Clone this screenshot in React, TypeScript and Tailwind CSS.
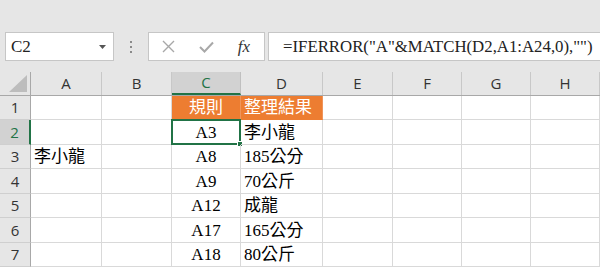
import React from "react";

const cols = [
  { k: "A", w: 71 },
  { k: "B", w: 70 },
  { k: "C", w: 69 },
  { k: "D", w: 82 },
  { k: "E", w: 70 },
  { k: "F", w: 69 },
  { k: "G", w: 69 },
  { k: "H", w: 69 },
];

const rowHeights = [24, 25, 24, 25, 24, 25, 24];

type Row = { A?: string; C?: string; D?: string };
const rows: Row[] = [
  { C: "規則", D: "整理結果" },
  { C: "A3", D: "李小龍" },
  { A: "李小龍", C: "A8", D: "185公分" },
  { C: "A9", D: "70公斤" },
  { C: "A12", D: "成龍" },
  { C: "A17", D: "165公分" },
  { C: "A18", D: "80公斤" },
];

const cellFont = {
  fontFamily: '"Liberation Serif", "Noto Sans CJK TC", serif',
};
const uiFont = { fontFamily: '"Open Sans", "Noto Sans", sans-serif' };

export default function App() {
  return (
    <div className="w-[600px] h-[269px] bg-white overflow-hidden relative">
      {/* Top formula bar area */}
      <div className="h-[72px] bg-[#e6e6e6] pt-[32px] pl-[5px] flex items-start">
        <div
          className="w-[109px] h-[29px] bg-white border border-[#c6c6c6] flex items-center justify-between pl-[5px] pr-[7px] text-[17px] text-[#222]"
          style={cellFont}
        >
          <span>C2</span>
          <svg width="7" height="4" viewBox="0 0 7 4">
            <path d="M0 0 L7 0 L3.5 4 Z" fill="#555" />
          </svg>
        </div>
        <div className="w-[34px] h-[29px] flex flex-col items-center justify-center gap-[3px]">
          <div className="w-[2px] h-[2px] bg-[#8a8a8a]" />
          <div className="w-[2px] h-[2px] bg-[#8a8a8a]" />
          <div className="w-[2px] h-[2px] bg-[#8a8a8a]" />
        </div>
        <div className="w-[117px] h-[29px] bg-white border border-[#c6c6c6] flex items-center">
          <div className="w-[38px] flex justify-center">
            <svg width="13" height="13" viewBox="0 0 13 13">
              <path d="M1 1 L12 12 M12 1 L1 12" stroke="#a8a8a8" strokeWidth="1.4" />
            </svg>
          </div>
          <div className="w-[38px] flex justify-center">
            <svg width="15" height="12" viewBox="0 0 15 12">
              <path d="M1 6 L5.5 10.5 L14 1.5" stroke="#a8a8a8" strokeWidth="2" fill="none" />
            </svg>
          </div>
          <div
            className="w-[38px] flex justify-center text-[17px] italic text-[#333] leading-none"
            style={{ fontFamily: '"Liberation Serif", serif' }}
          >
            fx
          </div>
        </div>
        <div
          className="flex-1 ml-[3px] h-[29px] bg-white border border-r-0 border-[#c6c6c6] flex items-center pl-[14px] text-[16.8px] text-[#222] whitespace-nowrap"
          style={cellFont}
        >
          =IFERROR("A"&amp;MATCH(D2,A1:A24,0),"")
        </div>
      </div>

      {/* Column header row */}
      <div className="flex h-[24px] bg-[#e6e6e6] border-b border-[#a8a8a8]" style={uiFont}>
        <div className="w-[31px] shrink-0 h-full border-r border-[#a8a8a8] flex items-end justify-end pb-[3px] pr-[3px]">
          <svg width="18" height="17" viewBox="0 0 18 17">
            <path d="M18 0 L18 17 L0 17 Z" fill="#bdbdbd" />
          </svg>
        </div>
        {cols.map((c) => {
          const sel = c.k === "C";
          return (
            <div
              key={c.k}
              style={{ width: c.w }}
              className={
                "shrink-0 h-full flex items-center justify-center text-[15px] border-r " +
                (sel
                  ? "bg-[#d2d2d2] text-[#217346] border-[#c0c0c0] border-b-2 border-b-[#217346] -mb-px"
                  : "text-[#333] border-[#c8c8c8]")
              }
            >
              {c.k}
            </div>
          );
        })}
      </div>

      {/* Rows */}
      {rows.map((r, i) => {
        const h = rowHeights[i];
        const rowSel = i === 1;
        return (
          <div key={i} className="flex" style={{ height: h }}>
            <div
              className={
                "w-[31px] shrink-0 h-full flex items-center justify-center text-[15px] border-b border-b-[#cfcfcf] " +
                (rowSel
                  ? "bg-[#d2d2d2] text-[#217346] border-r-2 border-r-[#217346]"
                  : "bg-[#e6e6e6] text-[#333] border-r border-r-[#a8a8a8]")
              }
              style={uiFont}
            >
              {i + 1}
            </div>
            {cols.map((c) => {
              const v = (r as Record<string, string | undefined>)[c.k];
              const orange = i === 0 && (c.k === "C" || c.k === "D");
              const isC2 = i === 1 && c.k === "C";
              return (
                <div
                  key={c.k}
                  style={{ width: c.w, ...cellFont }}
                  className={
                    "shrink-0 h-full relative flex items-center text-[17px] leading-none whitespace-nowrap border-r border-b " +
                    (orange
                      ? "bg-[#ed7d31] text-white border-r-[#f0945a] border-b-[#ed7d31] "
                      : "text-black border-[#d9d9d9] ") +
                    (c.k === "C" ? "justify-center" : "justify-start pl-[3px]")
                  }
                >
                  {v}
                  {isC2 && (
                    <div className="absolute left-[-1px] top-[-1px] w-[70px] h-[26px] border-2 border-[#217346]">
                      <div className="absolute right-[-4px] bottom-[-4px] w-[6px] h-[6px] bg-[#217346] border border-white" />
                    </div>
                  )}
                </div>
              );
            })}
          </div>
        );
      })}
    </div>
  );
}
